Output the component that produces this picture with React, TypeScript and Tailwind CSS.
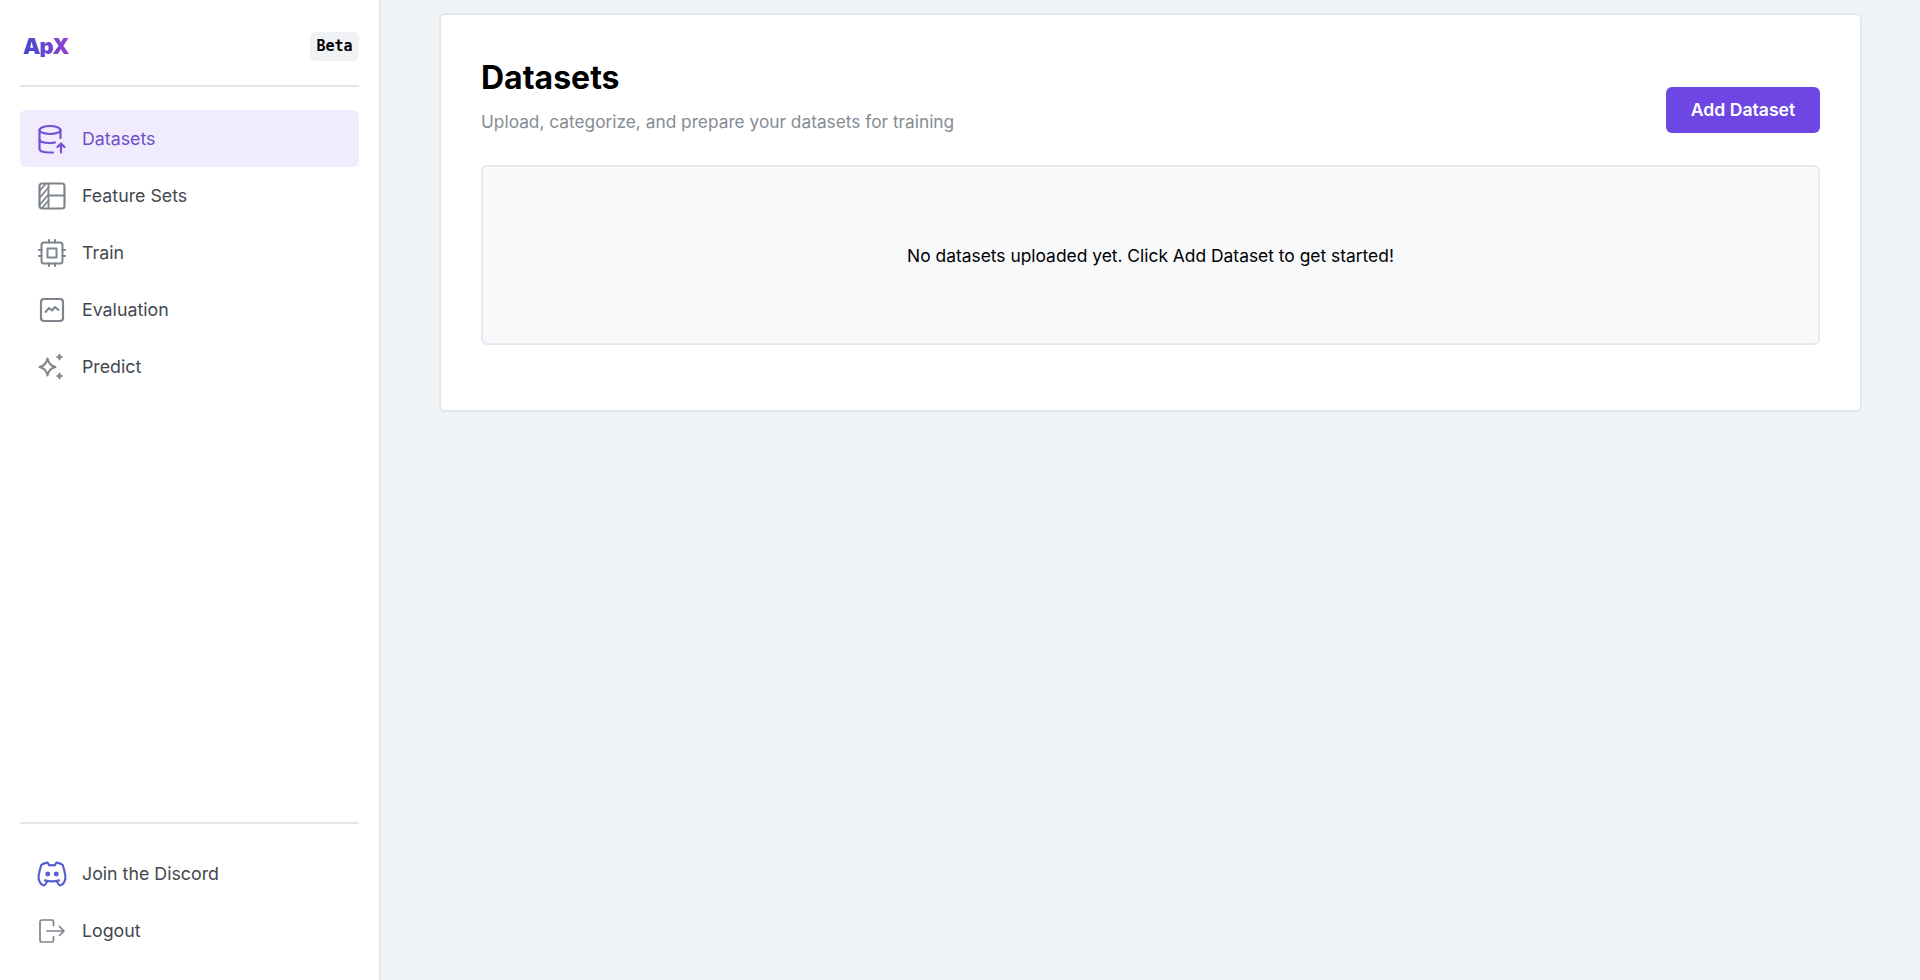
import { TbBrandDiscord } from "react-icons/tb";

function DatasetIcon() {
  return (
    <svg width="30" height="30" viewBox="0 0 30 30" fill="none" stroke="currentColor" strokeWidth="2.200" strokeLinecap="round" strokeLinejoin="round">
      <ellipse cx="13" cy="6" rx="10.500" ry="4" />
      <path d="M2.500 6v19c0 2 3.500 3.500 10.500 3.500h3" />
      <path d="M2.500 15.500c0 2 4 3.500 10.500 3.500 2 0 3.500-.2 5-.5" />
      <path d="M23.500 6v8" />
      <path d="M24 28.500v-9M20.500 23l3.500-3.500 3.500 3.500" />
    </svg>
  );
}

function FeatureIcon() {
  return (
    <svg width="28" height="28" viewBox="0 0 28 28" fill="none" stroke="currentColor" strokeWidth="2.200" strokeLinecap="round" strokeLinejoin="round">
      <rect x="1.500" y="1.500" width="25" height="25" rx="2.500" />
      <path d="M10.500 1.500v25M10.500 13.500h16" strokeWidth="1.800" />
      <path d="M1.500 9l6-7M1.500 16l9-10.500M1.500 23l9-10.500M4 26l6.500-7.500" strokeWidth="1.800" />
    </svg>
  );
}

function TrainIcon() {
  return (
    <svg width="28" height="28" viewBox="0 0 28 28" fill="none" stroke="currentColor" strokeWidth="2" strokeLinecap="round" strokeLinejoin="round">
      <rect x="3.500" y="3.500" width="21" height="21" rx="2.500" />
      <rect x="9.500" y="9.500" width="9" height="9" />
      <path d="M11 1v2.500M17 1v2.500M11 24.500V27M17 24.500V27M1 11h2.500M1 17h2.500M24.500 11H27M24.500 17H27" />
    </svg>
  );
}

function EvalIcon() {
  return (
    <svg width="26" height="26" viewBox="0 0 26 26" fill="none" stroke="currentColor" strokeWidth="2.200" strokeLinecap="round" strokeLinejoin="round">
      <rect x="2" y="2" width="22" height="22" rx="3" />
      <path d="M6.500 15l3.500-4 3 2.500 3-3.500 3.500 3" strokeWidth="2" />
    </svg>
  );
}

function PredictIcon() {
  return (
    <svg width="28" height="28" viewBox="0 0 28 28" fill="none" stroke="currentColor" strokeWidth="2" strokeLinejoin="round">
      <path d="M9.500 5.500c1 5 3 7.500 8 8.500-5 1-7 3.500-8 8.500-1-5-3-7.500-8-8.500 5-1 7-3.500 8-8.500z" />
      <path d="M21.500 1c.4 2 1 2.600 3 3-2 .4-2.600 1-3 3-.4-2-1-2.600-3-3 2-.4 2.600-1 3-3z" fill="currentColor" strokeWidth="1.200" />
      <path d="M21.500 20c.4 2 1 2.600 3 3-2 .4-2.600 1-3 3-.4-2-1-2.600-3-3 2-.4 2.600-1 3-3z" fill="currentColor" strokeWidth="1.200" />
    </svg>
  );
}

function LogoutIcon() {
  return (
    <svg width="28" height="28" viewBox="0 0 28 28" fill="none" stroke="currentColor" strokeWidth="1.700" strokeLinecap="round" strokeLinejoin="round">
      <path d="M15.500 8.500V4.500c0-1-.7-1.500-1.500-1.500H4C2.700 3 2 3.800 2 5v18c0 1.200.7 2 2 2h10c.8 0 1.500-.5 1.500-1.500v-4" />
      <path d="M9 14h17M21.500 9.500L26 14l-4.500 4.500" />
    </svg>
  );
}

const navItems = [
  { label: "Datasets", icon: <DatasetIcon />, active: true },
  { label: "Feature Sets", icon: <FeatureIcon /> },
  { label: "Train", icon: <TrainIcon /> },
  { label: "Evaluation", icon: <EvalIcon /> },
  { label: "Predict", icon: <PredictIcon /> },
];

function NavRow({ label, icon, active, iconClass }: { label: string; icon: React.ReactNode; active?: boolean; iconClass?: string }) {
  return (
    <a
      className={
        active
          ? "flex h-[57px] items-center rounded-md bg-[#f0ecfd] text-[#6e4fc9]"
          : "flex h-[57px] items-center rounded-md text-[#43484f]"
      }
    >
      <span className={"flex w-[62px] shrink-0 items-center justify-center pl-[1px] " + (active ? "text-[#7451d6]" : iconClass ?? "text-[#7f858c]")}>
        {icon}
      </span>
      <span className="text-[17.8px] font-normal leading-none">{label}</span>
    </a>
  );
}

export default function App() {
  return (
    <div className="flex h-[980px] overflow-hidden bg-[#eff3f6] font-['Inter',sans-serif]">
      {/* Sidebar */}
      <aside className="flex w-[381px] shrink-0 flex-col border-r-2 border-[#e4e8ed] bg-white px-5">
        <div className="flex h-[87px] items-center justify-between border-b-2 border-[#e2e5e9] pt-[7px]">
          <span className="ml-[3px] bg-gradient-to-r from-[#3f48cc] to-[#9040d0] bg-clip-text text-[22px] font-black leading-none tracking-[-0.04em] text-transparent">
            ApX
          </span>
          <span className="flex h-[29px] w-[49px] items-center justify-center rounded-md bg-[#f0f2f5] font-['DejaVu_Sans_Mono',monospace] text-[15px] font-bold text-black">
            Beta
          </span>
        </div>
        <nav className="mt-[23px] flex flex-1 flex-col">
          {navItems.map((item) => (
            <NavRow key={item.label} {...item} />
          ))}
        </nav>
        <div className="flex flex-col border-t-2 border-[#e2e5e9] pt-[21px] pb-[21px]">
          <NavRow
            label="Join the Discord"
            icon={<TbBrandDiscord size={34} strokeWidth={1.500} />}
            iconClass="text-[#5660cc]"
          />
          <NavRow label="Logout" icon={<LogoutIcon />} />
        </div>
      </aside>

      {/* Main */}
      <main className="flex-1 px-[58px] pt-[13px]">
        <section className="rounded-md border-2 border-[#e4e8ed] bg-white px-[40px] pt-[40px] pb-[65px]">
          <div className="flex items-center justify-between">
            <div>
              <h1 className="text-[32px] leading-[44px] font-bold text-black pt-[1px]">Datasets</h1>
              <p className="mt-[8px] text-[17.3px] leading-[27px] text-[#858c94]">
                Upload, categorize, and prepare your datasets for training
              </p>
            </div>
            <button className="mt-[30px] h-[46px] w-[154px] rounded-md bg-[#6d46e3] text-[17.6px] font-semibold text-white">
              Add Dataset
            </button>
          </div>
          <div className="mt-[30px] flex h-[180px] items-center justify-center rounded-md border-2 border-[#e6e9ed] bg-[#f8f9fb] pt-[2px] text-[17.4px] text-black">
            No datasets uploaded yet. Click Add Dataset to get started!
          </div>
        </section>
      </main>
    </div>
  );
}
